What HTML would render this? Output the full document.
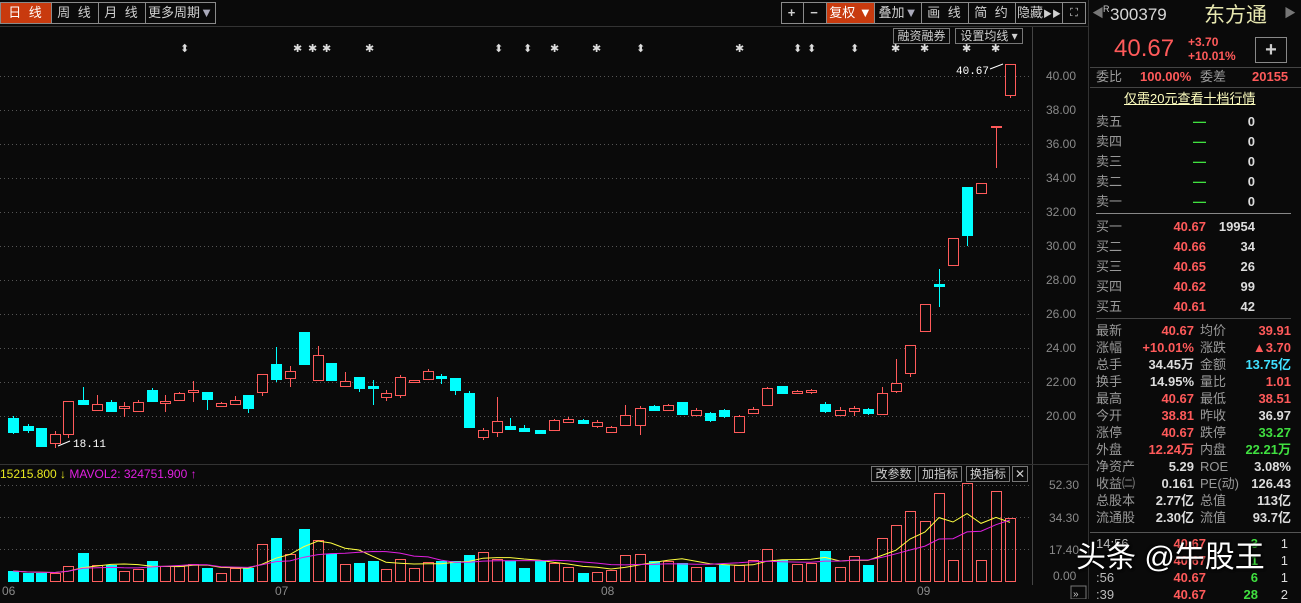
<!DOCTYPE html>
<html><head><meta charset="utf-8">
<style>
*{margin:0;padding:0;box-sizing:border-box}
body{width:1301px;height:599px;background:#0a0a0a;overflow:hidden;position:relative;font-family:"Liberation Sans","Noto Sans CJK SC",sans-serif;color:#c8c8c8}
.btn{position:absolute;top:2px;height:22px;border:1px solid #8a8a8a;font-size:13px;line-height:20px;text-align:center;color:#d0d0d0;background:#0a0a0a;letter-spacing:2px}
.red{background:#c83a0e;color:#fff}
.t{position:absolute;white-space:nowrap;font-size:13px;line-height:17px}
.sbtn{position:absolute;height:16px;border:1px solid #777;font-size:12px;line-height:14px;color:#cfcfcf;text-align:center;background:#0a0a0a}
</style></head><body>
<div class="btn red" style="left:0;width:52px">日 线</div>
<div class="btn" style="left:51px;width:48px">周 线</div>
<div class="btn" style="left:98px;width:48px">月 线</div>
<div class="btn" style="left:145px;width:71px;letter-spacing:0">更多周期<span style="color:#aab">▼</span></div>
<div class="btn" style="left:781px;width:23px;font-weight:bold">+</div>
<div class="btn" style="left:803px;width:24px;font-weight:bold">−</div>
<div class="btn red" style="left:826px;width:49px;letter-spacing:0">复权 ▼</div>
<div class="btn" style="left:874px;width:48px;letter-spacing:0">叠加<span style="color:#aab">▼</span></div>
<div class="btn" style="left:921px;width:48px">画 线</div>
<div class="btn" style="left:968px;width:48px">简 约</div>
<div class="btn" style="left:1015px;width:48px;letter-spacing:0">隐藏<span style="font-size:9px">▶▶</span></div>
<div class="btn" style="left:1062px;width:24px;letter-spacing:0;font-size:11px">⛶</div>
<div style="position:absolute;left:0;top:26px;width:1088px;height:1px;background:#333"></div>
<div class="sbtn" style="left:893px;top:28px;width:57px">融资融券</div>
<div class="sbtn" style="left:955px;top:28px;width:68px">设置均线 ▾</div>

<svg style="position:absolute;left:0;top:0" width="1090" height="599">
<g stroke="#555" stroke-dasharray="1 3" stroke-width="1" id="grid"></g>
<line x1="1032.5" y1="27" x2="1032.5" y2="585" stroke="#444"/>
<line x1="0" y1="464.5" x2="1088" y2="464.5" stroke="#333"/>
<line x1="1088.5" y1="0" x2="1088.5" y2="599" stroke="#333"/>
<g id="cand"></g>
<g id="vol"></g>
<g id="mk" fill="#ddd" font-size="11" font-family="DejaVu Sans"></g>
<text x="956" y="74" fill="#fff" font-size="11" font-family="Liberation Mono">40.67</text>
<path d="M990 69 L1003 64" stroke="#fff"/>
<path d="M58 446 L70 441" stroke="#fff"/>
<text x="73" y="447" fill="#fff" font-size="11" font-family="Liberation Mono">18.11</text>
<g fill="#8a8a8a" font-size="12">
<text x="1046" y="80">40.00</text><text x="1046" y="114">38.00</text><text x="1046" y="148">36.00</text><text x="1046" y="182">34.00</text><text x="1046" y="216">32.00</text><text x="1046" y="250">30.00</text><text x="1046" y="284">28.00</text><text x="1046" y="318">26.00</text><text x="1046" y="352">24.00</text><text x="1046" y="386">22.00</text><text x="1046" y="420">20.00</text>
<text x="1049" y="489">52.30</text><text x="1049" y="522">34.30</text><text x="1049" y="554">17.40</text><text x="1053" y="580">0.00</text>
<text x="2" y="595">06</text><text x="275" y="595">07</text><text x="601" y="595">08</text><text x="917" y="595">09</text>
</g>
<rect x="1071" y="586" width="15" height="13" fill="none" stroke="#777"/>
<text x="1073" y="597" fill="#ccc" font-size="10">»</text>
<polyline id="ma1" fill="none" stroke="#ffff40" stroke-width="1"/>
<polyline id="ma2" fill="none" stroke="#e020e0" stroke-width="1"/>
</svg>
<div class="t" style="left:0;top:466px;font-size:12px;color:#e8e820">15215.800 ↓ <span style="color:#e020e0">MAVOL2: 324751.900 ↑</span></div>
<div class="sbtn" style="left:871px;top:466px;width:45px">改参数</div>
<div class="sbtn" style="left:918px;top:466px;width:44px">加指标</div>
<div class="sbtn" style="left:966px;top:466px;width:44px">换指标</div>
<div class="sbtn" style="left:1012px;top:466px;width:16px">✕</div>

<div style="position:absolute;left:1090px;top:0;width:211px;height:599px;background:#0a0a0a">
<div class="t" style="left:2px;top:5px;color:#777;font-size:12px">◀</div>
<div class="t" style="left:13px;top:1px;font-size:9px;color:#ccc">R</div>
<div class="t" style="left:20px;top:6px;font-size:17px;color:#d8d8d8">300379</div>
<div class="t" style="left:114px;top:3px;font-size:21px;line-height:26px;color:#e8e8b0">东方通</div>
<div class="t" style="left:194px;top:5px;color:#777;font-size:12px">▶</div>
<div class="t" style="left:24px;top:35px;font-size:24px;line-height:28px;color:#ff5a5a">40.67</div>
<div class="t" style="left:98px;top:35px;font-size:12px;line-height:14px;color:#ff5a5a;font-weight:bold">+3.70<br>+10.01%</div>
<div style="position:absolute;left:165px;top:37px;width:32px;height:26px;border:1px solid #888;color:#ccc;text-align:center;font-size:20px;line-height:24px;font-weight:bold">+</div>
<div style="position:absolute;left:0;top:67px;width:211px;height:1px;background:#444"></div>
<div class="t" style="left:6px;top:68px;color:#999">委比</div>
<div class="t" style="left:50px;top:68px;color:#ff5a5a;font-weight:bold">100.00%</div>
<div class="t" style="left:110px;top:68px;color:#999">委差</div>
<div class="t" style="left:162px;top:68px;color:#ff5a5a;font-weight:bold">20155</div>
<div style="position:absolute;left:0;top:87px;width:211px;height:1px;background:#444"></div>
<div class="t" style="left:34px;top:90px;color:#ffffc0;text-decoration:underline">仅需20元查看十档行情</div>
<div id="rp"></div>
<div style="position:absolute;left:6px;top:213px;width:195px;height:1px;background:#888"></div>
<div style="position:absolute;left:6px;top:318px;width:195px;height:1px;background:#444"></div>
<div style="position:absolute;left:0;top:532px;width:211px;height:1px;background:#555"></div>
</div>
<div class="t" style="left:1076px;top:538px;font-size:30px;line-height:40px;color:#fff;text-shadow:0 0 3px #000,1px 1px 2px #000">头条 @牛股王</div>

<script>
var g=document.getElementById('grid'),s='';
[76,110,144,178,212,246,280,314,348,382,416,485,517,549].forEach(function(y){s+='<line x1="0" y1="'+(y+.5)+'" x2="1032" y2="'+(y+.5)+'"/>'});
g.innerHTML=s;
var C=[[13,'c',418,432,416,434,10],[28,'c',426,430,424,433,8],[41,'c',428,446,428,447,8],[55,'r',434,443,431,448,8],[68,'r',401,434,401,438,15],[83,'c',400,404,387,404,28],[97,'r',404,410,395,410,16],[111,'c',402,411,400,412,16],[124,'r',406,408,402,417,10],[138,'r',402,411,400,412,12],[152,'c',390,401,388,401,20],[165,'r',401,403,395,412,15],[179,'r',393,400,392,400,15],[193,'r',390,392,381,402,17],[207,'c',392,399,392,410,13],[221,'r',403,406,402,406,8],[235,'r',400,404,396,404,13],[248,'c',395,408,395,413,13],[262,'r',374,392,374,396,37],[276,'c',364,379,347,382,43],[290,'r',371,378,366,387,27],[304,'c',332,364,332,364,52],[318,'r',355,380,346,380,41],[331,'c',363,380,363,381,27],[345,'r',381,386,372,386,17],[359,'c',377,388,377,392,18],[373,'c',386,388,380,405,20],[386,'r',393,397,390,401,12],[400,'r',377,395,375,398,22],[414,'r',380,382,380,382,13],[428,'r',371,379,369,380,19],[441,'c',376,378,374,384,20],[455,'c',378,390,378,395,20],[469,'c',393,427,391,427,26],[483,'r',430,437,428,440,29],[497,'r',421,432,397,437,22],[510,'c',426,429,418,430,20],[524,'c',428,431,425,432,13],[540,'c',430,433,430,434,20],[554,'r',420,430,419,431,18],[568,'r',419,422,417,423,14],[583,'c',420,423,419,424,8],[597,'r',422,426,420,428,9],[611,'r',427,432,426,433,11],[625,'r',415,425,405,426,26],[640,'r',408,425,406,435,27],[654,'c',406,410,405,411,20],[668,'r',405,410,404,411,20],[682,'c',402,414,402,414,18],[696,'r',410,415,408,416,14],[710,'c',413,420,412,422,14],[724,'c',410,416,409,418,16],[739,'r',416,432,415,433,16],[753,'r',409,413,407,414,21],[767,'r',388,405,387,406,32],[782,'c',386,393,386,394,21],[797,'r',391,393,390,394,17],[811,'r',390,392,389,394,18],[825,'c',404,411,402,413,30],[840,'r',410,415,407,416,14],[854,'r',408,411,406,416,25],[868,'c',409,413,408,415,16],[882,'r',393,414,387,414,43],[896,'r',383,391,359,393,56],[910,'r',345,373,345,377,70],[925,'r',304,331,304,331,60],[939,'c',284,286,269,307,88],[953,'r',238,265,238,266,21],[967,'c',187,235,187,246,98],[981,'r',183,193,183,193,21],[996,'r',126,127,126,168,90],[1010,'r',64,95,64,98,63]];
var h='',v='';
C.forEach(function(c,i){var x=c[0],col=c[1]=='r'?'#ff5a5a':'#00ffff';
h+='<line x1="'+(x+.5)+'" y1="'+c[4]+'" x2="'+(x+.5)+'" y2="'+c[5]+'" stroke="'+col+'"/>';
var bh=Math.max(c[3]-c[2],1);
if(c[1]=='r')h+='<rect x="'+(x-4.5)+'" y="'+(c[2]+.5)+'" width="10" height="'+(bh)+'" fill="#0a0a0a" stroke="#ff5a5a"/>';
else h+='<rect x="'+(x-5)+'" y="'+c[2]+'" width="11" height="'+(bh+1)+'" fill="#00ffff"/>';
var vy=581-c[6],vr=(c[1]=='r'||x>875);
if(vr)v+='<rect x="'+(x-4.5)+'" y="'+(vy+.5)+'" width="10" height="'+c[6]+'" fill="none" stroke="#ff6060"/>';
else v+='<rect x="'+(x-5)+'" y="'+vy+'" width="11" height="'+(c[6]+1)+'" fill="#00ffff"/>';
});
document.getElementById('cand').innerHTML=h;document.getElementById('vol').innerHTML=v;
function ma(n){var p=[];for(var i=0;i<C.length;i++){var s=0,k=0;for(var j=Math.max(0,i-n+1);j<=i;j++){s+=C[j][6];k++}p.push(C[i][0]+','+(581-s/k).toFixed(1))}return p.join(' ')}
document.getElementById('ma1').setAttribute('points',ma(5));
document.getElementById('ma2').setAttribute('points',ma(10));
var mk='';[184,498,527,640,797,811,854].forEach(function(x){mk+='<text x="'+(x-4)+'" y="52">⬍</text>'});
[298,313,327,370,555,597,740,896,925,967,996].forEach(function(x){mk+='<text x="'+(x-5)+'" y="52">✱</text>'});
document.getElementById('mk').innerHTML=mk;
var R=[[122,'卖五','—','0',1],[142,'卖四','—','0',1],[162,'卖三','—','0',1],[182,'卖二','—','0',1],[202,'卖一','—','0',1],
[227,'买一','40.67','19954'],[247,'买二','40.66','34'],[267,'买三','40.65','26'],[287,'买四','40.62','99'],[307,'买五','40.61','42']];
var r='';R.forEach(function(a){var t=a[0]-9;
r+='<div class="t" style="left:6px;top:'+t+'px;color:#999">'+a[1]+'</div>';
r+='<div class="t" style="left:50px;width:66px;text-align:right;top:'+t+'px;color:'+(a[4]?'#40e040':'#ff5a5a')+';font-weight:bold">'+a[2]+'</div>';
r+='<div class="t" style="left:100px;width:65px;text-align:right;top:'+t+'px;color:#ddd;font-weight:bold">'+a[3]+'</div>';});
var Q=[['最新','40.67','#ff5a5a','均价','39.91','#ff5a5a'],['涨幅','+10.01%','#ff5a5a','涨跌','▲3.70','#ff5a5a'],['总手','34.45万','#ddd','金额','13.75亿','#40e0ff'],['换手','14.95%','#ddd','量比','1.01','#ff5a5a'],['最高','40.67','#ff5a5a','最低','38.51','#ff5a5a'],['今开','38.81','#ff5a5a','昨收','36.97','#ddd'],['涨停','40.67','#ff5a5a','跌停','33.27','#40e040'],['外盘','12.24万','#ff5a5a','内盘','22.21万','#40e040'],['净资产','5.29','#ddd','ROE','3.08%','#ddd'],['收益㈡','0.161','#ddd','PE(动)','126.43','#ddd'],['总股本','2.77亿','#ddd','总值','113亿','#ddd'],['流通股','2.30亿','#ddd','流值','93.7亿','#ddd']];
Q.forEach(function(a,i){var t=322+i*17;
r+='<div class="t" style="left:6px;top:'+t+'px;color:#999">'+a[0]+'</div>';
r+='<div class="t" style="left:40px;width:64px;text-align:right;top:'+t+'px;color:'+a[2]+';font-weight:bold">'+a[1]+'</div>';
r+='<div class="t" style="left:110px;top:'+t+'px;color:#999">'+a[3]+'</div>';
r+='<div class="t" style="left:140px;width:61px;text-align:right;top:'+t+'px;color:'+a[5]+';font-weight:bold">'+a[4]+'</div>';});
[[535,'14:56','40.67','3','1'],[552,'','40.67','1','1'],[569,':56','40.67','6','1'],[586,':39','40.67','28','2']].forEach(function(a){
r+='<div class="t" style="left:6px;top:'+a[0]+'px;color:#bbb">'+a[1]+'</div>';
r+='<div class="t" style="left:60px;width:56px;text-align:right;top:'+a[0]+'px;color:#ff5a5a;font-weight:bold">'+a[2]+'</div>';
r+='<div class="t" style="left:130px;width:38px;text-align:right;top:'+a[0]+'px;color:#40e040;font-weight:bold">'+a[3]+'</div>';
r+='<div class="t" style="left:180px;width:18px;text-align:right;top:'+a[0]+'px;color:#ddd">'+a[4]+'</div>';});
document.getElementById('rp').innerHTML=r;
</script>
</body></html>
